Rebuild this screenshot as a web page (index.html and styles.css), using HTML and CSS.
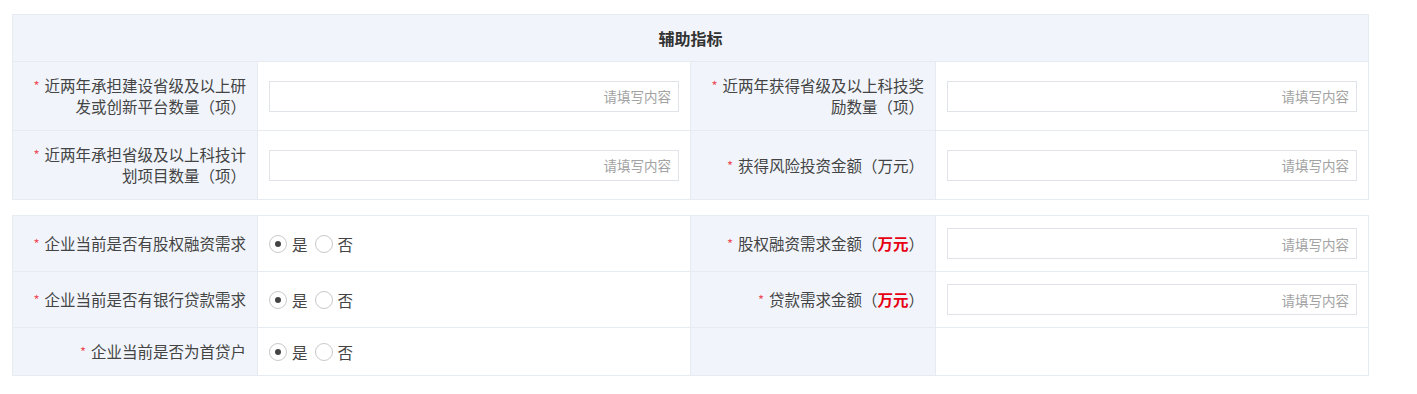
FILE: index.html
```html
<!DOCTYPE html>
<html lang="zh-CN">
<head>
<meta charset="utf-8">
<title>辅助指标</title>
<link rel="stylesheet" href="styles.css">
</head>
<body>
<div class="page">
  <div class="panel panel-top">
    <div class="head">辅助指标</div>

    <div class="label tall"><span class="txt"><span class="req">*</span>近两年承担建设省级及以上研<br>发或创新平台数量（项）</span></div>
    <div class="field"><input class="text" placeholder="请填写内容"></div>
    <div class="label tall"><span class="txt"><span class="req">*</span>近两年获得省级及以上科技奖<br>励数量（项）</span></div>
    <div class="field"><input class="text" placeholder="请填写内容"></div>

    <div class="label tall"><span class="txt"><span class="req">*</span>近两年承担省级及以上科技计<br>划项目数量（项）</span></div>
    <div class="field"><input class="text" placeholder="请填写内容"></div>
    <div class="label tall"><span class="txt"><span class="req">*</span>获得风险投资金额（万元）</span></div>
    <div class="field"><input class="text" placeholder="请填写内容"></div>
  </div>

  <div class="panel panel-bottom">
    <div class="label"><span class="txt"><span class="req">*</span>企业当前是否有股权融资需求</span></div>
    <div class="field">
      <div class="radios">
        <span class="radio"><span class="circle on"></span>是</span>
        <span class="radio"><span class="circle"></span>否</span>
      </div>
    </div>
    <div class="label"><span class="txt"><span class="req">*</span>股权融资需求金额（<b class="unit">万元</b>）</span></div>
    <div class="field"><input class="text" placeholder="请填写内容"></div>

    <div class="label"><span class="txt"><span class="req">*</span>企业当前是否有银行贷款需求</span></div>
    <div class="field">
      <div class="radios">
        <span class="radio"><span class="circle on"></span>是</span>
        <span class="radio"><span class="circle"></span>否</span>
      </div>
    </div>
    <div class="label"><span class="txt"><span class="req">*</span>贷款需求金额（<b class="unit">万元</b>）</span></div>
    <div class="field"><input class="text" placeholder="请填写内容"></div>

    <div class="label"><span class="txt"><span class="req">*</span>企业当前是否为首贷户</span></div>
    <div class="field">
      <div class="radios">
        <span class="radio"><span class="circle on"></span>是</span>
        <span class="radio"><span class="circle"></span>否</span>
      </div>
    </div>
    <div class="label"></div>
    <div class="field"></div>
  </div>
</div>
</body>
</html>
```

FILE: styles.css
```css
* { box-sizing: border-box; }

html, body {
  margin: 0;
  background: #ffffff;
}

body {
  font-family: "Noto Sans CJK SC", "Noto Sans", "Liberation Sans", sans-serif;
  color: #444;
}

.page {
  padding: 14px 0 0 12px;
}

.panel {
  width: 1357px;
  display: grid;
  grid-template-columns: 244px 432px 244px 432px;
  gap: 1px;
  background: #e6ebf1;
  border: 1px solid #e6ebf1;
}

.panel-bottom {
  margin-top: 15px;
}

.head {
  grid-column: 1 / -1;
  height: 46px;
  background: #f1f5fb;
  display: flex;
  align-items: center;
  justify-content: center;
  font-size: 16px;
  font-weight: 700;
  color: #333;
}

.label {
  background: #f1f5fb;
  display: flex;
  align-items: center;
  justify-content: flex-end;
  text-align: right;
  padding: 12px 11px 12px 12px;
  font-size: 15.5px;
  line-height: 23px;
  color: #444;
}

.label.tall {
  padding-top: 13px;
  padding-bottom: 13px;
  line-height: 21px;
  min-height: 68px;
}

.txt {
  display: block;
}

.req {
  color: #ee4d5a;
  font-size: 13px;
  margin-right: 5px;
  vertical-align: 1px;
}

.unit {
  color: #e60012;
  font-weight: 700;
}

.field {
  background: #ffffff;
  display: flex;
  align-items: center;
  padding: 12px 11px;
}

.text {
  width: 100%;
  height: 31px;
  border: 1px solid #e0e3e8;
  border-radius: 0;
  background: #fff;
  padding: 0 7px;
  font-family: inherit;
  font-size: 13.5px;
  text-align: right;
  outline: none;
}

.text::placeholder {
  color: #a3a3a3;
}

.radios {
  display: flex;
  align-items: center;
  gap: 7px;
  font-size: 15.5px;
  line-height: 22px;
  color: #444;
}

.radio {
  display: inline-flex;
  align-items: center;
  gap: 5px;
}

.circle {
  width: 18px;
  height: 18px;
  border-radius: 50%;
  border: 1px solid #c9c9c9;
  background: #fff;
  display: inline-flex;
  align-items: center;
  justify-content: center;
}

.circle.on::after {
  content: "";
  width: 6px;
  height: 6px;
  border-radius: 50%;
  background: #444;
}
```
